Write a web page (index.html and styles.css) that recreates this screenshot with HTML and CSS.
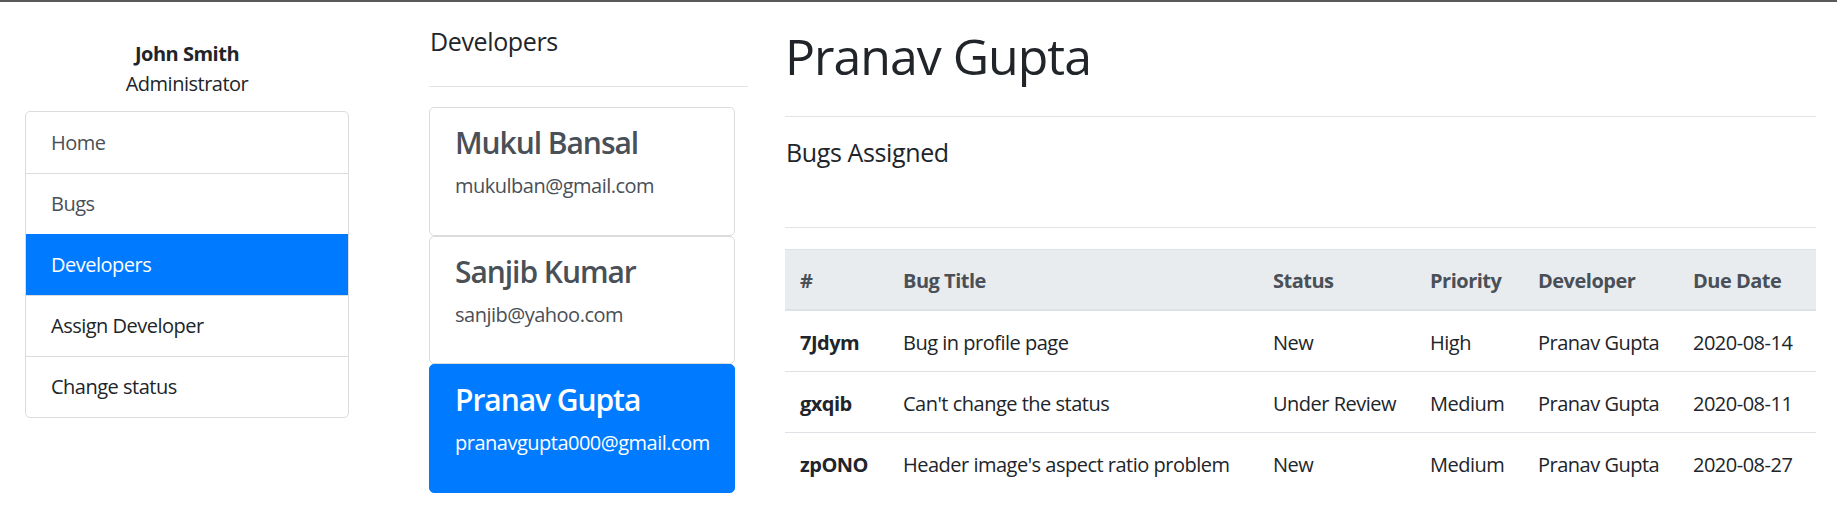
FILE: index.html
```html
<!DOCTYPE html>
<html lang="en">
<head>
<meta charset="utf-8">
<title>Developers</title>
<link rel="stylesheet" href="styles.css">
</head>
<body>
<div class="page">
  <aside class="sidebar">
    <div class="profile">
      <div class="profile-name">John Smith</div>
      <div class="profile-role">Administrator</div>
    </div>
    <nav class="nav-list">
      <a class="nav-item muted" href="#">Home</a>
      <a class="nav-item muted" href="#">Bugs</a>
      <a class="nav-item active" href="#">Developers</a>
      <a class="nav-item" href="#">Assign Developer</a>
      <a class="nav-item" href="#">Change status</a>
    </nav>
  </aside>

  <section class="devs">
    <h5 class="section-title">Developers</h5>
    <hr class="rule">
    <div class="dev-list">
      <div class="dev-card">
        <h4 class="dev-name">Mukul Bansal</h4>
        <p class="dev-mail">mukulban@gmail.com</p>
      </div>
      <div class="dev-card">
        <h4 class="dev-name">Sanjib Kumar</h4>
        <p class="dev-mail">sanjib@yahoo.com</p>
      </div>
      <div class="dev-card selected">
        <h4 class="dev-name">Pranav Gupta</h4>
        <p class="dev-mail">pranavgupta000@gmail.com</p>
      </div>
    </div>
  </section>

  <main class="detail">
    <h1 class="detail-title">Pranav Gupta</h1>
    <hr class="rule">
    <h5 class="section-title">Bugs Assigned</h5>
    <hr class="rule rule-lower">
    <table class="bugs">
      <colgroup>
        <col class="c-id"><col class="c-title"><col class="c-status"><col class="c-prio"><col class="c-dev"><col class="c-date">
      </colgroup>
      <thead>
        <tr><th>#</th><th>Bug Title</th><th>Status</th><th>Priority</th><th>Developer</th><th>Due Date</th></tr>
      </thead>
      <tbody>
        <tr><th>7Jdym</th><td>Bug in profile page</td><td>New</td><td>High</td><td>Pranav Gupta</td><td>2020-08-14</td></tr>
        <tr><th>gxqib</th><td>Can't change the status</td><td>Under Review</td><td>Medium</td><td>Pranav Gupta</td><td>2020-08-11</td></tr>
        <tr><th>zpONO</th><td>Header image's aspect ratio problem</td><td>New</td><td>Medium</td><td>Pranav Gupta</td><td>2020-08-27</td></tr>
      </tbody>
    </table>
  </main>
</div>
</body>
</html>
```
FILE: styles.css
```css
* { box-sizing: border-box; }

html, body {
  margin: 0;
  padding: 0;
  background: #fff;
}

body {
  border-top: 2px solid #5a5a5a;
  font-family: "Open Sans", "Noto Sans", "Liberation Sans", sans-serif;
  font-size: 20px;
  line-height: 30px;
  color: #212529;
  letter-spacing: -0.025em;
}

.page {
  display: flex;
  align-items: flex-start;
  padding: 24px 0 0 25px;
}

/* Sidebar */
.sidebar {
  width: 324px;
  flex: none;
}

.profile {
  margin-top: 13px;
  text-align: center;
  margin-bottom: 12px;
}

.profile-name { font-weight: 700; }

.nav-list {
  display: flex;
  flex-direction: column;
  border: 1px solid #dcdcdc;
  border-radius: 5px;
  overflow: hidden;
}

.nav-item {
  display: block;
  padding: 15px 25px;
  color: #212529;
  text-decoration: none;
  border-top: 1px solid #dcdcdc;
  line-height: 30px;
}

.nav-item:first-child { border-top: 0; padding-top: 16px; }

.nav-item.muted { color: #495057; }

.nav-item.active {
  background: #007bff;
  color: #fff;
  border-top-color: #007bff;
  margin: 0 -1px;
  padding-left: 26px;
}

/* Developers column */
.devs {
  width: 319px;
  flex: none;
  margin-left: 80px;
}

.section-title {
  margin: 0;
  font-size: 25px;
  line-height: 30px;
  font-weight: 500;
  padding-left: 1px;
  letter-spacing: -0.015em;
}

.rule {
  margin: 30px 0 20px;
  border: 0;
  border-top: 1px solid #e3e3e3;
  height: 0;
}

.dev-list {
  width: 306px;
  display: flex;
  flex-direction: column;
}

.dev-card {
  border: 1px solid #dcdcdc;
  border-radius: 5px;
  padding: 17px 25px 13px;
  height: 128.5px;
  color: #495057;
}

.dev-card.selected {
  background: #007bff;
  border-color: #007bff;
  color: #fff;
}

.dev-name {
  margin: 0 0 10px;
  font-size: 30px;
  line-height: 36px;
  font-weight: 600;
  letter-spacing: -0.035em;
}

.dev-mail {
  margin: 0;
}

/* Main detail */
.detail {
  width: 1031px;
  flex: none;
  margin-left: 37px;
}

.detail-title {
  margin: 0;
  font-size: 50px;
  line-height: 60px;
  font-weight: 500;
  letter-spacing: -0.02em;
}

.rule-lower { margin-top: 60px; margin-bottom: 21px; }

.bugs {
  width: 100%;
  border-collapse: collapse;
  table-layout: fixed;
}

.c-id { width: 103px; }
.c-title { width: 370px; }
.c-status { width: 157px; }
.c-prio { width: 108px; }
.c-dev { width: 155px; }
.c-date { width: 138px; }

.bugs th,
.bugs td {
  text-align: left;
  padding: 17px 15px 13px;
  line-height: 30px;
  border-top: 1px solid #dee2e6;
  white-space: nowrap;
}

.bugs thead th {
  background: #e9ecef;
  color: #495057;
  font-weight: 700;
  border-bottom: 2px solid #dee2e6;
  padding-top: 16px;
}

.bugs tbody th { font-weight: 700; }
```
